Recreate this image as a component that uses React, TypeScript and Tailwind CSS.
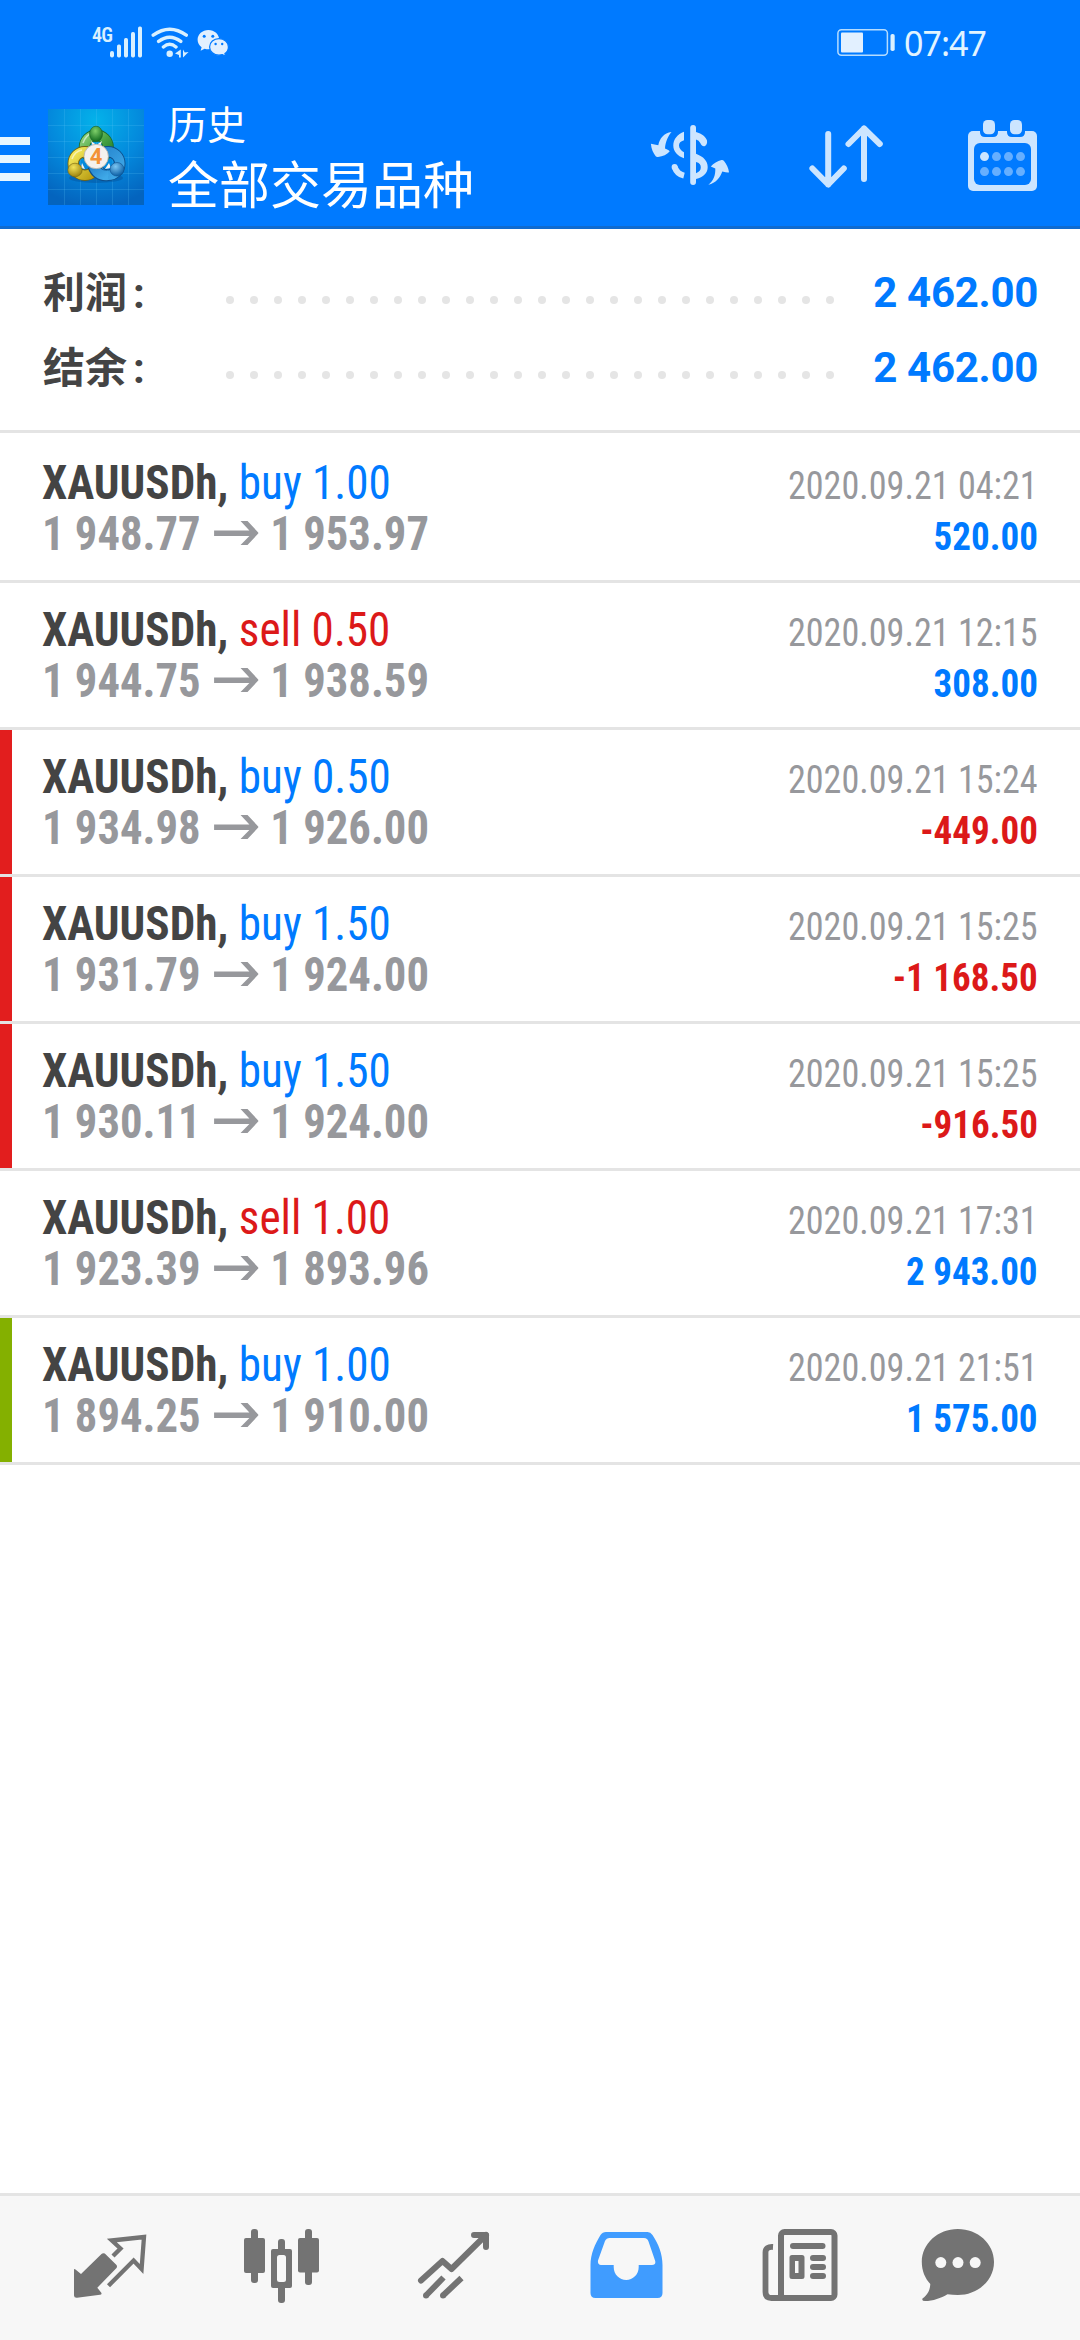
import type { ReactNode } from 'react';
import clsx from 'clsx';

interface Deal {
  symbol: string;
  side: 'buy' | 'sell';
  volume: string;
  open: string;
  close: string;
  time: string;
  profit: string;
  mark?: 'sl' | 'tp';
}

const deals: Deal[] = [
  { symbol: 'XAUUSDh', side: 'buy', volume: '1.00', open: '1 948.77', close: '1 953.97', time: '2020.09.21 04:21', profit: '520.00' },
  { symbol: 'XAUUSDh', side: 'sell', volume: '0.50', open: '1 944.75', close: '1 938.59', time: '2020.09.21 12:15', profit: '308.00' },
  { symbol: 'XAUUSDh', side: 'buy', volume: '0.50', open: '1 934.98', close: '1 926.00', time: '2020.09.21 15:24', profit: '-449.00', mark: 'sl' },
  { symbol: 'XAUUSDh', side: 'buy', volume: '1.50', open: '1 931.79', close: '1 924.00', time: '2020.09.21 15:25', profit: '-1 168.50', mark: 'sl' },
  { symbol: 'XAUUSDh', side: 'buy', volume: '1.50', open: '1 930.11', close: '1 924.00', time: '2020.09.21 15:25', profit: '-916.50', mark: 'sl' },
  { symbol: 'XAUUSDh', side: 'sell', volume: '1.00', open: '1 923.39', close: '1 893.96', time: '2020.09.21 17:31', profit: '2 943.00' },
  { symbol: 'XAUUSDh', side: 'buy', volume: '1.00', open: '1 894.25', close: '1 910.00', time: '2020.09.21 21:51', profit: '1 575.00', mark: 'tp' },
];

const summary = [
  { label: '利润', value: '2 462.00' },
  { label: '结余', value: '2 462.00' },
];

function StatusBar() {
  return (
    <div className="flex h-[86px] items-start justify-between pr-[91px] pl-[92px]">
      <div className="flex pt-[26px]">
        <span className="w-[18px] pt-px font-['Roboto'] text-[20px] leading-[16px] font-semibold tracking-[-0.04em] font-stretch-condensed text-[#d9f0ff]">4G</span>
        <svg className="h-8 w-[32px]" viewBox="110 26 32 32" fill="#d9f0ff">
          <rect x="110" y="51" width="4" height="6.5" rx="2" />
          <rect x="117" y="44.5" width="4" height="13" rx="1.7" />
          <rect x="124" y="38" width="4" height="19.5" rx="1.7" />
          <rect x="131" y="32" width="4" height="25.5" rx="1.7" />
          <rect x="138" y="26.5" width="4" height="31" rx="1.7" />
        </svg>
        <svg className="ml-[8px] h-8 w-[40px]" viewBox="150 26 40 32" fill="none" stroke="#d9f0ff" strokeWidth="3.4" strokeLinecap="round">
          <path d="M153.2 35.2Q169.7 23.2 186.3 35.2M158.6 41.4Q169.7 33 180.8 41.4M163.4 47Q169.7 41.6 176 47" />
          <circle cx="169.7" cy="53.7" r="3.2" fill="#d9f0ff" stroke="none" />
          <path d="M180.8 49.5V57.5H179V55L175 53.5ZM183 49.5V57.5L184.6 56L185.5 55L188.6 52L184.8 52.5Z" fill="#d9f0ff" stroke="none" />
        </svg>
        <svg className="ml-[6px] h-8 w-[36px]" viewBox="196 26 36 32" fill="#e2f0ff">
          <path d="M208.4 30c-6 0-10.8 4.4-10.8 9.8 0 3.3 1.6 5.7 4 7.5l-1 3.4 4-2c1.3.4 2.6.6 3.8.6 6 0 10.8-4 10.8-9.5 0-5.4-4.8-9.8-10.8-9.8z" />
          <path d="M219 38.6c-5.3 0-9.4 3.7-9.4 8.3s4.2 8.3 9.4 8.3c1.2 0 2.3-.2 3.4-.5l3.2 1.7-.7-2.8c2.2-1.6 3.5-4 3.5-6.7 0-4.6-4.2-8.3-9.4-8.3z" stroke="#007aff" strokeWidth="1.2" />
          <g fill="#007aff">
            <circle cx="204.2" cy="36.3" r="1.5" />
            <circle cx="212.8" cy="36.3" r="1.5" />
            <circle cx="215.6" cy="44" r="1.2" />
            <circle cx="222.2" cy="44" r="1.2" />
          </g>
        </svg>
      </div>
      <div className="flex pt-[26px]">
        <svg className="h-8 w-[60px]" viewBox="836 26 60 32">
          <rect x="837.9" y="29.7" width="49.5" height="25.6" rx="3.5" fill="none" stroke="#b5dcff" strokeWidth="1.5" />
          <rect x="841" y="32.5" width="22" height="20" rx="1" fill="#e2f0ff" />
          <rect x="890.5" y="34" width="4.2" height="17" rx="1.8" fill="#d9f0ff" />
        </svg>
        <span className="ml-[8px] w-[85px] font-['Noto_Sans'] text-[34px] leading-[34px] tracking-[-1px] whitespace-nowrap text-[#e2f4ff]">07:47</span>
      </div>
    </div>
  );
}

function AppLogo() {
  return (
    <svg className="size-24" viewBox="0 0 96 96">
      <defs>
        <radialGradient id="bg" cx=".5" cy=".12" r=".9">
          <stop offset="0" stopColor="#04b2ea" />
          <stop offset=".55" stopColor="#0488dc" />
          <stop offset="1" stopColor="#0464be" />
        </radialGradient>
        <linearGradient id="green" x1="0" y1="0" x2="1" y2="1">
          <stop offset="0" stopColor="#8fd07a" />
          <stop offset=".5" stopColor="#4aa545" />
          <stop offset="1" stopColor="#1f7d2a" />
        </linearGradient>
        <linearGradient id="yellow" x1="0" y1="0" x2="1" y2="1">
          <stop offset="0" stopColor="#f4ea5c" />
          <stop offset="1" stopColor="#b79a10" />
        </linearGradient>
        <linearGradient id="blue" x1="0" y1="0" x2="1" y2="1">
          <stop offset="0" stopColor="#2583cc" />
          <stop offset="1" stopColor="#3fa9e8" />
        </linearGradient>
        <radialGradient id="greenHead" cx=".45" cy=".3" r=".7">
          <stop offset="0" stopColor="#7fd06a" />
          <stop offset="1" stopColor="#0f6a1e" />
        </radialGradient>
        <radialGradient id="yellowHead" cx=".4" cy=".3" r=".7">
          <stop offset="0" stopColor="#f2e258" />
          <stop offset="1" stopColor="#9d8410" />
        </radialGradient>
        <radialGradient id="blueHead" cx=".4" cy=".3" r=".7">
          <stop offset="0" stopColor="#7cc6f2" />
          <stop offset="1" stopColor="#0b5fa6" />
        </radialGradient>
      </defs>
      <rect width="96" height="96" fill="url(#bg)" />
      <path d="M0 16.5H96M0 32.5H96M0 48.5H96M0 64.5H96M0 80.5H96M16.5 0V96M32.5 0V96M48.5 0V96M64.5 0V96M80.5 0V96" stroke="#5cc3f5" strokeOpacity=".22" />
      <ellipse cx="48" cy="69" rx="27" ry="5" fill="#044c92" opacity=".4" />
      <circle cx="48.3" cy="38" r="11.8" fill="none" stroke="#1c6a2c" strokeWidth="11.4" />
      <circle cx="48.3" cy="38" r="11.8" fill="none" stroke="url(#green)" strokeWidth="9.6" />
      <circle cx="60" cy="54.5" r="11.8" fill="none" stroke="#0d4f8c" strokeWidth="11.4" />
      <circle cx="60" cy="54.5" r="11.8" fill="none" stroke="url(#blue)" strokeWidth="9.6" />
      <circle cx="37" cy="54.5" r="11.8" fill="none" stroke="#756410" strokeWidth="11.4" />
      <circle cx="37" cy="54.5" r="11.8" fill="none" stroke="url(#yellow)" strokeWidth="9.6" />
      <path d="M45 57Q49 67.5 60 66.3" fill="none" stroke="#0d4f8c" strokeWidth="11.4" />
      <path d="M45 56Q49 67.5 60.5 66.3" fill="none" stroke="url(#blue)" strokeWidth="9.6" />
      <path d="M34 54L37 60L33 59ZM61 54L57 60L63 59ZM43 32L48.5 36L54 32L52 38H45Z" fill="#f4f4f4" />
      <path d="M35 34Q38 26 44 24M24 50Q27 42 34 41" fill="none" stroke="#ffffff" strokeOpacity=".55" strokeWidth="1.5" />
      <ellipse cx="48" cy="25" rx="6.5" ry="7.8" fill="url(#greenHead)" stroke="#175c22" strokeWidth=".6" />
      <ellipse cx="27" cy="61" rx="7.2" ry="6.8" fill="url(#yellowHead)" stroke="#756410" strokeWidth=".6" />
      <ellipse cx="69" cy="60.3" rx="7" ry="6.8" fill="url(#blueHead)" stroke="#0d4f8c" strokeWidth=".6" />
      <circle cx="48.2" cy="47.5" r="12.2" fill="#f4f1ee" stroke="#b3aea6" strokeWidth=".8" />
      <text x="48" y="55.3" textAnchor="middle" fontFamily="Roboto" fontSize="22" fontWeight="700" fill="#f39237">4</text>
    </svg>
  );
}

function TopBar() {
  return (
    <header className="h-[229px] border-b-[3px] border-[#0f6bd0] bg-[#007aff]">
      <StatusBar />
      <div className="flex items-start">
        <div className="mt-[51px] w-[30px]">
          <div className="mb-[10px] h-2 bg-[#e8f6ff]" />
          <div className="mb-[10px] h-2 bg-[#e8f6ff]" />
          <div className="h-2 bg-[#e8f6ff]" />
        </div>
        <div className="mt-[23px] ml-[18px]">
          <AppLogo />
        </div>
        <div className="ml-6 flex-1 font-['Noto_Sans_CJK_SC',sans-serif] text-white">
          <div className="mt-[12px] text-[39px] leading-[48px]">历史</div>
          <div className="mt-[4px] text-[51px] leading-[64px]">全部交易品种</div>
        </div>
        <svg className="mt-[29px] h-[80px] w-[90px]" viewBox="645 115 90 80" fill="#cce5ff">
          <path d="M671.5 132C664 133 659.5 138.5 658.3 145.2L650.9 143.8C651.2 149 653.5 153.5 655.7 156.3Q656.5 157.2 658 157C663 156.6 667 154.5 669.6 151.6Q670 150.3 665 148.4C665.3 142 668.2 136 671.5 132Z" />
          <path d="M684 131.8V140.3C680.5 141.5 679 143 679 145.5S681 151 684 152.3V158.2C677.5 156 673.3 151.5 673.3 145.5S677.5 134 684 131.8Z" />
          <path d="M674.6 167Q677 174 684 175.7" fill="none" stroke="#cce5ff" strokeWidth="6" />
          <circle cx="674.6" cy="167" r="3" />
          <rect x="690.2" y="125" width="5.8" height="60" rx="2.9" />
          <path d="M696 132C702 133.5 706 137 707 140.5C707.3 143 707 145 704.5 146.2C702.5 146.5 701 145 700.3 143Q699 140.5 696 139.6Z" />
          <path d="M696 153.7C703.5 156.5 707.7 161 707.7 167S703.5 177 696 179V173.2C699.5 172 700.8 170 700.8 167.3S699.5 163 696 162Z" />
          <path d="M708.4 184.8C714 180 715.5 175 715.3 168.5L710.8 166.5C713.5 163.5 717.5 161 721.5 160Q723 159.7 724 161C726.5 164 728.6 168 729 172.3Q728 173 722.3 171.6C720 178 716 183 708.4 184.8Z" />
        </svg>
        <svg className="mt-[34px] ml-[70px] h-[70px] w-[80px]" viewBox="805 120 80 70" fill="none" stroke="#cce5ff" strokeWidth="6" strokeLinecap="round" strokeLinejoin="round">
          <path d="M828.2 134V184.5M812.4 168.5L828.2 184.5L843.8 168.5" />
          <path d="M864 179V128.5M848.5 144L864 128.5L879.8 144" />
        </svg>
        <svg className="mt-[32px] mr-[38px] ml-[77px] h-[76px] w-[80px]" viewBox="962 118 80 76">
          <rect x="968" y="131" width="69" height="60" rx="5" fill="#cce5ff" />
          <path d="M980 129H998V132Q998 137 993 137H985Q980 137 980 132ZM1007 129H1025V132Q1025 137 1020 137H1012Q1007 137 1007 132Z" fill="#007aff" />
          <rect x="983" y="120" width="12" height="14.2" rx="4.5" fill="#cce5ff" />
          <rect x="1010" y="120" width="12" height="14.2" rx="4.5" fill="#cce5ff" />
          <rect x="974" y="143" width="57" height="42" rx="6" fill="#007aff" />
          <circle cx="984.5" cy="156.6" r="4.5" fill="#cce5ff" />
          <g fill="#66afff">
            <circle cx="996.5" cy="156.6" r="4.5" />
            <circle cx="1008.5" cy="156.6" r="4.5" />
            <circle cx="1020.5" cy="156.6" r="4.5" />
            <circle cx="984.5" cy="171.6" r="4.5" />
            <circle cx="996.5" cy="171.6" r="4.5" />
            <circle cx="1008.5" cy="171.6" r="4.5" />
            <circle cx="1020.5" cy="171.6" r="4.5" />
          </g>
        </svg>
      </div>
    </header>
  );
}

function Summary() {
  return (
    <section className="h-[204px] border-b-[3px] border-[#e4e4e4] pt-[26px]">
      {summary.map((row) => (
        <div key={row.label} className="flex h-[75px] items-center px-[42px] font-['Roboto','Noto_Sans_CJK_SC',sans-serif] text-[42px] leading-[75px] font-bold">
          <span className="w-[184px] pt-[2px] pl-px text-[#444444]">
            {row.label}
            <span className="ml-[6px]">:</span>
          </span>
          <div className="mt-[15px] flex gap-4">
            {Array.from({ length: 26 }, (_, i) => (
              <span key={i} className="size-2 rounded-full bg-[#e5e5e5]" />
            ))}
          </div>
          <span className="ml-auto tracking-[-0.3px] text-[#007aff]">{row.value}</span>
        </div>
      ))}
    </section>
  );
}

function DealRow({ symbol, side, volume, open, close, time, profit, mark }: Deal) {
  return (
    <li className="flex h-[147px] border-b-[3px] border-[#e4e4e4] font-['Roboto',sans-serif] font-stretch-condensed first:h-[150px]">
      <div className={clsx('w-3', mark === 'sl' && 'bg-[#e21e1e]', mark === 'tp' && 'bg-[#84b000]')} />
      <div className="flex flex-1 flex-col justify-end pr-[42px] pb-5 pl-[30px]">
        <div className="flex h-[51px] items-baseline justify-between">
          <div className="origin-left scale-x-[0.94] text-[48px] leading-[52px]">
            <span className="font-bold text-[#444444]">{symbol}, </span>
            <span className={side === 'buy' ? 'text-[#007aff]' : 'text-[#dc1919]'}>
              {side} {volume}
            </span>
          </div>
          <div className="origin-right scale-x-[0.926] text-[39px] leading-[45px] text-[#97989c]">{time}</div>
        </div>
        <div className="flex h-[52px] items-baseline justify-between">
          <div className="flex origin-left scale-x-[0.93] text-[48px] leading-[52px] font-bold text-[#97989c]">
            {open}
            <svg className="mt-[12px] mr-[13px] ml-[14px] h-[26px] w-[48px]" viewBox="0 0 48 26" fill="currentColor">
              <path d="M0 10.5H38L28.5 1H36L48 13L36 25H28.5L38 16H0Z" />
            </svg>
            {close}
          </div>
          <div className={clsx('origin-right scale-x-[0.95] text-[39px] leading-[45px] font-bold', profit.startsWith('-') ? 'text-[#dc1919]' : 'text-[#007aff]')}>
            {profit}
          </div>
        </div>
      </div>
    </li>
  );
}

function NavIcon({ x, active, children }: { x: number; active?: boolean; children: ReactNode }) {
  return (
    <svg className={clsx('h-[144px] w-[172px]', active ? 'text-[#409cff]' : 'text-[#737373]')} viewBox={`${x} 16 172 144`} fill="currentColor">
      {children}
    </svg>
  );
}

function BottomNav() {
  return (
    <nav className="flex h-[147px] border-t-[3px] border-[#e4e4e4] bg-[#f7f7f7] px-6">
      <NavIcon x={24}>
        <path d="M74 90Q74 88.5 75.5 89.5L81 94L101.5 74Q103 72.5 104.8 73.6L116.5 85Q117.5 86.7 116.5 88L97.3 107.8L101.5 113Q101.8 114.5 100 114.8L77 117.8Q74 118 74 115.5Z" />
        <path d="M113 76L120.5 68.5L111.8 60.5L144 57L141.6 89L133.6 80.5L108.5 105.8" fill="none" stroke="currentColor" strokeWidth="4.3" />
      </NavIcon>
      <NavIcon x={196}>
        <rect x="244" y="58" width="21" height="35" rx="2" />
        <rect x="251" y="49" width="7" height="54" rx="3" />
        <rect x="298" y="58" width="21" height="34.5" rx="2" />
        <rect x="305" y="49" width="7" height="56" rx="3" />
        <rect x="271" y="69" width="21" height="39" rx="2" />
        <rect x="278" y="59" width="7" height="64" rx="3" />
        <rect x="277" y="75" width="9" height="27" rx="2.5" fill="#f7f7f7" />
      </NavIcon>
      <NavIcon x={368}>
        <g fill="none" stroke="currentColor" strokeWidth="6" strokeLinejoin="round">
          <path d="M421 100.5L442.5 81L451.5 89L486 55" strokeLinecap="round" />
          <path d="M474 55H486V67" strokeLinecap="round" />
          <path d="M426 115.5L443.5 97.5M443 115.5L461.5 98" />
        </g>
        <circle cx="426" cy="115.5" r="3" />
        <circle cx="443" cy="115.5" r="3" />
      </NavIcon>
      <NavIcon x={540} active>
        <path fillRule="evenodd" d="M606 52H647.5Q650.5 52 652.5 55C658.5 64 662.5 74 662.5 85V113Q662.5 118 657.5 118H595.5Q590.5 118 590.5 113V85C590.5 74 595 64 600.5 55Q602.5 52 606 52ZM609.5 58Q606.5 58 605 61L598 80.5Q597.5 85 601 85H613.7V87C613.7 94.5 619.5 100 626.2 100S638.7 94.5 638.7 87V85H652Q656 85 655.2 81L648.5 61.5Q647.5 58 644 58Z" />
      </NavIcon>
      <NavIcon x={712}>
        <rect x="781" y="52" width="53.5" height="66" rx="3.5" fill="none" stroke="currentColor" strokeWidth="6" />
        <path d="M773 67Q765.5 66.5 765.5 72.5V112Q765.5 118 771.5 118H784" fill="none" stroke="currentColor" strokeWidth="5.8" />
        <rect x="790" y="63" width="35.5" height="6" rx="3" />
        <path fillRule="evenodd" d="M792 75H802Q804.5 75 804.5 77.5V96.5Q804.5 99 802 99H792Q789.5 99 789.5 96.5V77.5Q789.5 75 792 75ZM795 81V93H798.5V81Z" />
        <rect x="810" y="75" width="16" height="6" rx="3" />
        <rect x="810" y="84" width="16" height="6" rx="3" />
        <rect x="810" y="93" width="16" height="6" rx="3" />
      </NavIcon>
      <NavIcon x={884}>
        <path d="M957.8 49C938 49 921.8 63.5 921.8 82C921.8 90.5 925 98.5 930.3 104C930 110 928 114.5 922.5 118.5Q921.5 121 925 121C933 121 941 118 947.5 114.2Q952.5 115 957.8 115C977.8 115 994 100.5 994 82S977.8 49 957.8 49Z" />
        <g fill="#f7f7f7">
          <circle cx="940.8" cy="82.6" r="5.5" />
          <circle cx="958" cy="82.6" r="5.5" />
          <circle cx="975.2" cy="82.6" r="5.5" />
        </g>
      </NavIcon>
    </nav>
  );
}

export default function App() {
  return (
    <div className="flex h-[2340px] w-[1080px] flex-col bg-white">
      <TopBar />
      <Summary />
      <ul className="flex-1">
        {deals.map((deal) => (
          <DealRow key={deal.open} {...deal} />
        ))}
      </ul>
      <BottomNav />
    </div>
  );
}
